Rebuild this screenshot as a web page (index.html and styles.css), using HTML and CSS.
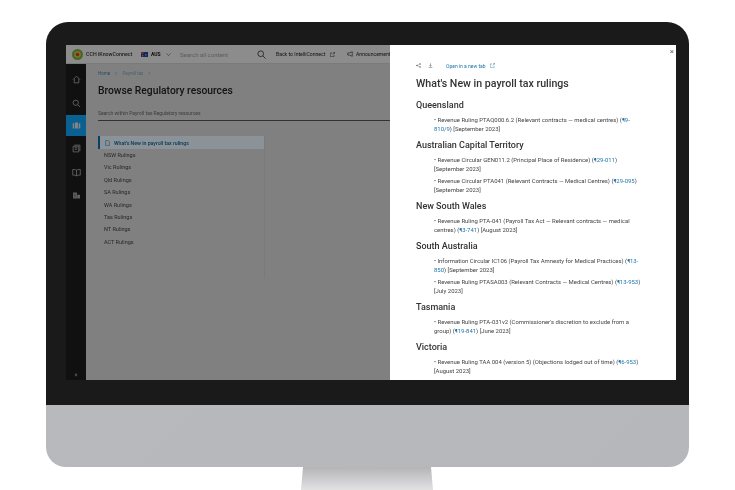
FILE: index.html
```html
<!DOCTYPE html>
<html lang="en">
<head>
    <meta charset="UTF-8">
    <title>What's New in payroll tax rulings</title>
    <link rel="stylesheet" href="styles.css">
</head>
<body>
    <div class="monitor">
        <div class="bezel">
            <div class="screen">
                <!-- App behind the drawer -->
                <div class="app">
                    <div class="topbar">
                        <svg class="logo" viewBox="0 0 12 12"><circle cx="6" cy="6" r="6" fill="#6fae45"/><circle cx="6" cy="6" r="3.6" fill="#e2b93b"/><circle cx="6" cy="6" r="1.9" fill="#c8402f"/></svg>
                        <span class="brand">CCH iKnowConnect</span>
                        <div class="region">
                            <svg class="flag" viewBox="0 0 10 7"><rect width="10" height="7" fill="#1f3f8f"/><rect width="4" height="3" fill="#b4475a"/><circle cx="7" cy="4" r="1" fill="#fff"/><circle cx="2.5" cy="5.2" r=".8" fill="#fff"/></svg>
                            <b>AUS</b>
                            <svg class="chev" viewBox="0 0 10 6"><path d="M1 1l4 4 4-4" fill="none" stroke="#333" stroke-width="1"/></svg>
                        </div>
                        <span class="search-all">Search all content</span>
                        <svg class="search-icon" viewBox="0 0 12 12"><circle cx="5" cy="5" r="3.8" fill="none" stroke="#222" stroke-width="1"/><path d="M8 8l3.5 3.5" stroke="#222" stroke-width="1"/></svg>
                        <span class="top-link">Back to IntelliConnect</span>
                        <svg class="ext" viewBox="0 0 8 8"><path d="M6.5 4.5v3h-6v-6h3M4 4l3.5-3.5M5 .5h2.5V3" fill="none" stroke="#222" stroke-width=".8"/></svg>
                        <svg class="horn" viewBox="0 0 8 8"><path d="M7 1v6L3 5.4H1V2.6h2z" fill="none" stroke="#222" stroke-width=".8"/></svg>
                        <span class="top-link">Announcements</span>
                    </div>
                    <div class="app-body">
                        <div class="sidebar">
                            <div class="side-item"><svg viewBox="0 0 12 12"><path d="M1.5 6L6 1.5 10.500 6M3 5v5.500h6V5" fill="none" stroke="#bbb" stroke-width="1"/></svg></div>
                            <div class="side-item"><svg viewBox="0 0 12 12"><circle cx="5" cy="5" r="3.500" fill="none" stroke="#bbb" stroke-width="1"/><path d="M7.800 7.800l3 3" stroke="#bbb" stroke-width="1"/></svg></div>
                            <div class="side-item active"><svg viewBox="0 0 12 12"><path d="M1 3h2v7H1zM4 2h4v8H4zM9 3h2v7H9z" fill="#ddd"/></svg></div>
                            <div class="side-item"><svg viewBox="0 0 12 12"><path d="M3 1.500h7.500v8M1.500 3h7.500v7.500H1.500zM3.500 5h3.500M3.500 7h3.500" fill="none" stroke="#bbb" stroke-width="1"/></svg></div>
                            <div class="side-item"><svg viewBox="0 0 12 12"><path d="M6 3C5 2 3 2 1 2v7.500c2 0 4 0 5 1 1-1 3-1 5-1V2C9 2 7 2 6 3zv7.500" fill="none" stroke="#bbb" stroke-width="1"/></svg></div>
                            <div class="side-item"><svg viewBox="0 0 12 12"><path d="M1.500 2h5v8h-5zM7 5h3.500v5H7z" fill="#aaa"/><path d="M3 4h2M3 6h2M3 8h2" stroke="#222" stroke-width=".7"/></svg></div>
                            <div class="side-expand">»</div>
                        </div>
                        <div class="main">
                            <div class="crumbs"><span class="crumb-home">Home</span><span>&gt;</span><span>Payroll tax</span><span>&gt;</span></div>
                            <h1 class="page-title">Browse Regulatory resources</h1>
                            <div class="search-within">Search within Payroll tax Regulatory resources</div>
                            <div class="nav-panel">
                                <div class="nav-active">
                                    <svg viewBox="0 0 8 10"><path d="M1 .5h4l2 2v7H1z" fill="none" stroke="#0d5c8f" stroke-width=".8"/></svg>
                                    What's New in payroll tax rulings
                                </div>
                                <div class="nav-item">NSW Rulings</div>
                                <div class="nav-item">Vic Rulings</div>
                                <div class="nav-item">Qld Rulings</div>
                                <div class="nav-item">SA Rulings</div>
                                <div class="nav-item">WA Rulings</div>
                                <div class="nav-item">Tas Rulings</div>
                                <div class="nav-item">NT Rulings</div>
                                <div class="nav-item">ACT Rulings</div>
                            </div>
                        </div>
                    </div>
                </div>
                <div class="scrim"></div>

                <!-- Drawer -->
                <div class="drawer">
                    <div class="close">×</div>
                    <div class="tools">
                        <svg viewBox="0 0 8 8"><circle cx="1.500" cy="4" r="1.200" fill="#666"/><circle cx="6.500" cy="1.500" r="1.200" fill="#666"/><circle cx="6.500" cy="6.500" r="1.200" fill="#666"/><path d="M1.500 4l5-2.500M1.500 4l5 2.500" stroke="#666" stroke-width=".6"/></svg>
                        <svg viewBox="0 0 8 8"><path d="M4 .5v4.500M2.200 3.500L4 5.500l1.800-2M1 7.300h6" fill="none" stroke="#666" stroke-width=".9"/></svg>
                        <a class="open-tab">Open in a new tab</a>
                        <svg class="tab-icon" viewBox="0 0 8 8"><path d="M6.500 4.500v3h-6v-6h3M4 4l3.500-3.500M5 .5h2.500V3" fill="none" stroke="#1d74a8" stroke-width=".7"/></svg>
                    </div>
                    <h2 class="doc-title">What's New in payroll tax rulings</h2>

                    <h3>Queensland</h3>
                    <p>• Revenue Ruling PTAQ000.6.2 (Relevant contracts — medical centres) (<a>¶9-</a><a>810/9</a>) [September 2023]</p>

                    <h3>Australian Capital Territory</h3>
                    <p>• Revenue Circular GEN011.2 (Principal Place of Residence) (<a>¶29-011</a>) [September 2023]</p>
                    <p>• Revenue Circular PTA041 (Relevant Contracts — Medical Centres) (<a>¶29-095</a>) [September 2023]</p>

                    <h3>New South Wales</h3>
                    <p>• Revenue Ruling PTA-041 (Payroll Tax Act — Relevant contracts — medical centres) (<a>¶3-741</a>) [August 2023]</p>

                    <h3>South Australia</h3>
                    <p>• Information Circular IC106 (Payroll Tax Amnesty for Medical Practices) (<a>¶13-</a><a>850</a>) [September 2023]</p>
                    <p>• Revenue Ruling PTASA003 (Relevant Contracts — Medical Centres) (<a>¶13-953</a>) [July 2023]</p>

                    <h3>Tasmania</h3>
                    <p>• Revenue Ruling PTA-031v2 (Commissioner's discretion to exclude from a group) (<a>¶19-841</a>) [June 2023]</p>

                    <h3>Victoria</h3>
                    <p>• Revenue Ruling TAA 004 (version 5) (Objections lodged out of time) (<a>¶6-953</a>) [August 2023]</p>
                </div>
            </div>
        </div>
        <div class="chin"></div>
    </div>
    <div class="stand"></div>
</body>
</html>
```

FILE: styles.css
```css
* {
    box-sizing: border-box;
}

html, body {
    height: 490px;
    overflow: hidden;
}

body {
    margin: 0;
    padding: 22px 46px 0;
    background: #ffffff;
    font-family: Roboto, Arial, sans-serif;
    color: #333333;
}

.monitor {
    width: 643px;
    height: 445px;
    display: flex;
    flex-direction: column;
    border-radius: 22px 22px 20px 20px;
    overflow: hidden;
}

.bezel {
    height: 383px;
    background: #1a1a1a;
    padding: 23px 13px 25px 20px;
}

.chin {
    flex: 1;
    background: linear-gradient(135deg, #b8b9bd, #b6b7ba);
}

.stand {
    width: 132px;
    height: 23px;
    margin-left: 255px;
    background: linear-gradient(#b4b4b7, #e2e2e3);
    clip-path: polygon(2px 0, 130px 0, 132px 100%, 0 100%);
}

.screen {
    position: relative;
    height: 335px;
    overflow: hidden;
    background: #d5d5d5;
}

.app {
    height: 100%;
    display: flex;
    flex-direction: column;
}

.scrim {
    position: absolute;
    inset: 0;
    background: rgba(0, 0, 0, 0.4);
}

.topbar {
    height: 19px;
    display: flex;
    align-items: center;
    padding-left: 6px;
    font-size: 5px;
    border-bottom: 1px solid #cccccc;
    background: #e9e9e9;
    white-space: nowrap;
    filter: blur(0.35px);
}

.logo {
    width: 11px;
    height: 11px;
    margin-right: 3px;
}

.brand {
    font-size: 5.300px;
    font-weight: 500;
    width: 55px;
}

.region {
    width: 34px;
    display: flex;
    align-items: center;
    gap: 3px;
    color: #111111;
}

.flag {
    width: 7px;
    height: 5px;
}

.chev {
    width: 5px;
    height: 3px;
    margin-left: 2px;
}

.search-all {
    width: 77px;
    margin-left: 5px;
    font-size: 6px;
    color: #999999;
}

.search-icon {
    width: 9px;
    height: 9px;
    margin-right: 10px;
}

.top-link {
    font-size: 5.100px;
    color: #222222;
    width: 53px;
}

.ext {
    width: 5px;
    height: 5px;
    margin-right: 12px;
    margin-left: 1px;
}

.horn {
    width: 6px;
    height: 6px;
    margin-right: 3px;
}

.app-body {
    flex: 1;
    display: flex;
    min-height: 0;
}

.sidebar {
    width: 20px;
    background: #1c1c1c;
    display: flex;
    flex-direction: column;
    padding-top: 4px;
    filter: blur(0.35px);
}

.side-item {
    height: 23.500px;
    display: flex;
    align-items: center;
    justify-content: center;
}

.side-item svg {
    width: 9px;
    height: 9px;
}

.side-item.active {
    height: 21px;
    margin-bottom: 1px;
    background: #11a0f0;
}

.side-expand {
    margin-top: auto;
    margin-bottom: 1px;
    text-align: center;
    font-size: 7px;
    color: #aaaaaa;
}

.main {
    flex: 1;
    padding: 6px 0 0 12px;
    filter: blur(0.35px);
}

.crumbs {
    display: flex;
    gap: 5px;
    font-size: 4.500px;
    line-height: 8px;
    color: #7fa3bd;
}

.crumb-home {
    color: #3f82ad;
}

.page-title {
    margin: 5px 0 0;
    font-size: 10.300px;
    line-height: 15px;
    font-weight: 500;
    color: #222222;
}

.search-within {
    margin-top: 12px;
    padding-bottom: 3px;
    height: 11px;
    font-size: 5px;
    color: #666666;
    border-bottom: 1px solid #555555;
}

.nav-panel {
    width: 167px;
    margin-top: 15px;
    border-right: 1px solid #cccccc;
    font-size: 5.500px;
    padding-bottom: 30px;
}

.nav-active {
    height: 13px;
    display: flex;
    align-items: center;
    gap: 4px;
    padding-left: 5px;
    background: #e8f5fd;
    border-left: 2px solid #0d6ea8;
    color: #0d5c8f;
    font-size: 5.200px;
    font-weight: 500;
}

.nav-active svg {
    width: 5px;
    height: 6px;
}

.nav-item {
    height: 12.400px;
    padding-left: 6px;
    line-height: 12.400px;
    color: #444444;
}

.drawer {
    position: absolute;
    top: 0;
    right: 0;
    bottom: 0;
    width: 286px;
    padding: 16px 33px 0 26px;
    background: #ffffff;
    overflow: hidden;
    filter: blur(0.3px);
}

.close {
    position: absolute;
    top: 2px;
    right: 2px;
    font-size: 8px;
    line-height: 10px;
    color: #666666;
}

.tools {
    display: flex;
    align-items: center;
    height: 9px;
    gap: 4px;
}

.tools svg {
    width: 5px;
    height: 5px;
}

.tools svg + svg {
    margin-left: 3px;
}

.open-tab {
    margin-left: 9px;
    font-size: 5px;
    color: #1d74a8;
}

.doc-title {
    margin: 6px 0;
    font-size: 10.600px;
    line-height: 16px;
    font-weight: 500;
    color: #333333;
}

h3 {
    margin: 5px 0 3px;
    font-size: 9px;
    line-height: 14px;
    font-weight: 500;
    color: #333333;
}

p {
    margin: 0 0 3px 18px;
    font-size: 5.950px;
    line-height: 9px;
    color: #444444;
}

p a {
    color: #1d74a8;
}
```
